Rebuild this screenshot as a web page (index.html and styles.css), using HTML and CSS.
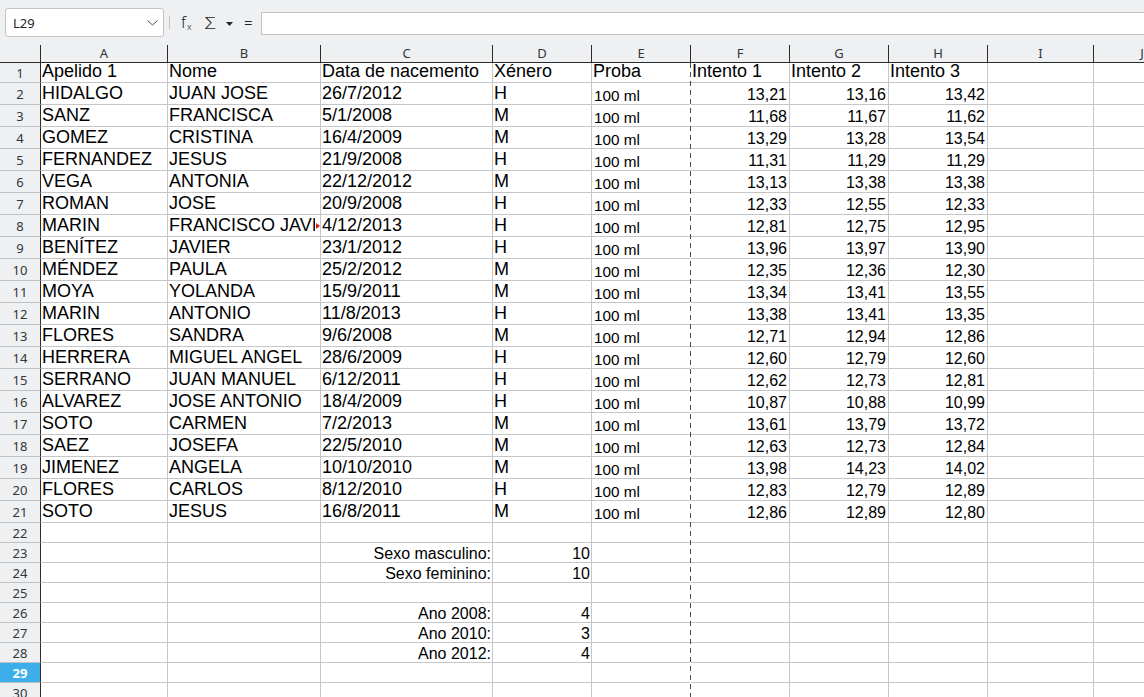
FILE: index.html
```html
<!DOCTYPE html>
<html lang="gl">
<head>
    <meta charset="UTF-8">
    <meta name="viewport" content="width=device-width, initial-scale=1.0">
    <title>Folla de cálculo</title>
    <link rel="stylesheet" href="styles.css">
</head>
<body>
    <div class="toolbar">
        <div class="namebox">
            <span>L29</span>
            <svg class="chev" width="11" height="6" viewBox="0 0 11 6"><polyline points="0.5,0.5 5.5,5 10.5,0.5" fill="none" stroke="#4d4d4d" stroke-width="1"/></svg>
        </div>
        <div class="sep"></div>
        <div class="tool fx">f<sub>x</sub></div>
        <div class="tool sum">&Sigma;</div>
        <svg class="tool drop" width="7" height="4" viewBox="0 0 7 4"><polygon points="0,0 7,0 3.5,4" fill="#232629"/></svg>
        <div class="tool eq">=</div>
        <div class="formula"></div>
    </div>

    <div class="sheet">
        <div class="row head">
            <div class="corner"></div>
            <div>A</div><div>B</div><div>C</div><div>D</div><div>E</div>
            <div>F</div><div>G</div><div>H</div><div>I</div><div>J</div>
        </div>

        <div class="row first">
            <div class="rh">1</div>
            <div class="c">Apelido 1</div><div class="c">Nome</div><div class="c">Data de nacemento</div><div class="c">Xénero</div><div class="c">Proba</div>
            <div class="c">Intento 1</div><div class="c">Intento 2</div><div class="c">Intento 3</div><div class="c"></div><div class="c"></div>
        </div>
        <div class="row">
            <div class="rh">2</div>
            <div class="c">HIDALGO</div><div class="c">JUAN JOSE</div><div class="c">26/7/2012</div><div class="c">H</div><div class="c ml">100 ml</div>
            <div class="c n">13,21</div><div class="c n">13,16</div><div class="c n">13,42</div><div class="c"></div><div class="c"></div>
        </div>
        <div class="row">
            <div class="rh">3</div>
            <div class="c">SANZ</div><div class="c">FRANCISCA</div><div class="c">5/1/2008</div><div class="c">M</div><div class="c ml">100 ml</div>
            <div class="c n">11,68</div><div class="c n">11,67</div><div class="c n">11,62</div><div class="c"></div><div class="c"></div>
        </div>
        <div class="row">
            <div class="rh">4</div>
            <div class="c">GOMEZ</div><div class="c">CRISTINA</div><div class="c">16/4/2009</div><div class="c">M</div><div class="c ml">100 ml</div>
            <div class="c n">13,29</div><div class="c n">13,28</div><div class="c n">13,54</div><div class="c"></div><div class="c"></div>
        </div>
        <div class="row">
            <div class="rh">5</div>
            <div class="c">FERNANDEZ</div><div class="c">JESUS</div><div class="c">21/9/2008</div><div class="c">H</div><div class="c ml">100 ml</div>
            <div class="c n">11,31</div><div class="c n">11,29</div><div class="c n">11,29</div><div class="c"></div><div class="c"></div>
        </div>
        <div class="row">
            <div class="rh">6</div>
            <div class="c">VEGA</div><div class="c">ANTONIA</div><div class="c">22/12/2012</div><div class="c">M</div><div class="c ml">100 ml</div>
            <div class="c n">13,13</div><div class="c n">13,38</div><div class="c n">13,38</div><div class="c"></div><div class="c"></div>
        </div>
        <div class="row">
            <div class="rh">7</div>
            <div class="c">ROMAN</div><div class="c">JOSE</div><div class="c">20/9/2008</div><div class="c">H</div><div class="c ml">100 ml</div>
            <div class="c n">12,33</div><div class="c n">12,55</div><div class="c n">12,33</div><div class="c"></div><div class="c"></div>
        </div>
        <div class="row">
            <div class="rh">8</div>
            <div class="c">MARIN</div><div class="c ov"><span class="clip">FRANCISCO JAVIER</span></div><div class="c">4/12/2013</div><div class="c">H</div><div class="c ml">100 ml</div>
            <div class="c n">12,81</div><div class="c n">12,75</div><div class="c n">12,95</div><div class="c"></div><div class="c"></div>
        </div>
        <div class="row">
            <div class="rh">9</div>
            <div class="c">BENÍTEZ</div><div class="c">JAVIER</div><div class="c">23/1/2012</div><div class="c">H</div><div class="c ml">100 ml</div>
            <div class="c n">13,96</div><div class="c n">13,97</div><div class="c n">13,90</div><div class="c"></div><div class="c"></div>
        </div>
        <div class="row">
            <div class="rh">10</div>
            <div class="c">MÉNDEZ</div><div class="c">PAULA</div><div class="c">25/2/2012</div><div class="c">M</div><div class="c ml">100 ml</div>
            <div class="c n">12,35</div><div class="c n">12,36</div><div class="c n">12,30</div><div class="c"></div><div class="c"></div>
        </div>
        <div class="row">
            <div class="rh">11</div>
            <div class="c">MOYA</div><div class="c">YOLANDA</div><div class="c">15/9/2011</div><div class="c">M</div><div class="c ml">100 ml</div>
            <div class="c n">13,34</div><div class="c n">13,41</div><div class="c n">13,55</div><div class="c"></div><div class="c"></div>
        </div>
        <div class="row">
            <div class="rh">12</div>
            <div class="c">MARIN</div><div class="c">ANTONIO</div><div class="c">11/8/2013</div><div class="c">H</div><div class="c ml">100 ml</div>
            <div class="c n">13,38</div><div class="c n">13,41</div><div class="c n">13,35</div><div class="c"></div><div class="c"></div>
        </div>
        <div class="row">
            <div class="rh">13</div>
            <div class="c">FLORES</div><div class="c">SANDRA</div><div class="c">9/6/2008</div><div class="c">M</div><div class="c ml">100 ml</div>
            <div class="c n">12,71</div><div class="c n">12,94</div><div class="c n">12,86</div><div class="c"></div><div class="c"></div>
        </div>
        <div class="row">
            <div class="rh">14</div>
            <div class="c">HERRERA</div><div class="c">MIGUEL ANGEL</div><div class="c">28/6/2009</div><div class="c">H</div><div class="c ml">100 ml</div>
            <div class="c n">12,60</div><div class="c n">12,79</div><div class="c n">12,60</div><div class="c"></div><div class="c"></div>
        </div>
        <div class="row">
            <div class="rh">15</div>
            <div class="c">SERRANO</div><div class="c">JUAN MANUEL</div><div class="c">6/12/2011</div><div class="c">H</div><div class="c ml">100 ml</div>
            <div class="c n">12,62</div><div class="c n">12,73</div><div class="c n">12,81</div><div class="c"></div><div class="c"></div>
        </div>
        <div class="row">
            <div class="rh">16</div>
            <div class="c">ALVAREZ</div><div class="c">JOSE ANTONIO</div><div class="c">18/4/2009</div><div class="c">H</div><div class="c ml">100 ml</div>
            <div class="c n">10,87</div><div class="c n">10,88</div><div class="c n">10,99</div><div class="c"></div><div class="c"></div>
        </div>
        <div class="row">
            <div class="rh">17</div>
            <div class="c">SOTO</div><div class="c">CARMEN</div><div class="c">7/2/2013</div><div class="c">M</div><div class="c ml">100 ml</div>
            <div class="c n">13,61</div><div class="c n">13,79</div><div class="c n">13,72</div><div class="c"></div><div class="c"></div>
        </div>
        <div class="row">
            <div class="rh">18</div>
            <div class="c">SAEZ</div><div class="c">JOSEFA</div><div class="c">22/5/2010</div><div class="c">M</div><div class="c ml">100 ml</div>
            <div class="c n">12,63</div><div class="c n">12,73</div><div class="c n">12,84</div><div class="c"></div><div class="c"></div>
        </div>
        <div class="row">
            <div class="rh">19</div>
            <div class="c">JIMENEZ</div><div class="c">ANGELA</div><div class="c">10/10/2010</div><div class="c">M</div><div class="c ml">100 ml</div>
            <div class="c n">13,98</div><div class="c n">14,23</div><div class="c n">14,02</div><div class="c"></div><div class="c"></div>
        </div>
        <div class="row">
            <div class="rh">20</div>
            <div class="c">FLORES</div><div class="c">CARLOS</div><div class="c">8/12/2010</div><div class="c">H</div><div class="c ml">100 ml</div>
            <div class="c n">12,83</div><div class="c n">12,79</div><div class="c n">12,89</div><div class="c"></div><div class="c"></div>
        </div>
        <div class="row">
            <div class="rh">21</div>
            <div class="c">SOTO</div><div class="c">JESUS</div><div class="c">16/8/2011</div><div class="c">M</div><div class="c ml">100 ml</div>
            <div class="c n">12,86</div><div class="c n">12,89</div><div class="c n">12,80</div><div class="c"></div><div class="c"></div>
        </div>

        <div class="row short">
            <div class="rh">22</div>
            <div class="c"></div><div class="c"></div><div class="c"></div><div class="c"></div><div class="c"></div>
            <div class="c"></div><div class="c"></div><div class="c"></div><div class="c"></div><div class="c"></div>
        </div>
        <div class="row short">
            <div class="rh">23</div>
            <div class="c"></div><div class="c"></div><div class="c s">Sexo masculino:</div><div class="c s">10</div><div class="c"></div>
            <div class="c"></div><div class="c"></div><div class="c"></div><div class="c"></div><div class="c"></div>
        </div>
        <div class="row short">
            <div class="rh">24</div>
            <div class="c"></div><div class="c"></div><div class="c s">Sexo feminino:</div><div class="c s">10</div><div class="c"></div>
            <div class="c"></div><div class="c"></div><div class="c"></div><div class="c"></div><div class="c"></div>
        </div>
        <div class="row short">
            <div class="rh">25</div>
            <div class="c"></div><div class="c"></div><div class="c"></div><div class="c"></div><div class="c"></div>
            <div class="c"></div><div class="c"></div><div class="c"></div><div class="c"></div><div class="c"></div>
        </div>
        <div class="row short">
            <div class="rh">26</div>
            <div class="c"></div><div class="c"></div><div class="c s">Ano 2008:</div><div class="c s">4</div><div class="c"></div>
            <div class="c"></div><div class="c"></div><div class="c"></div><div class="c"></div><div class="c"></div>
        </div>
        <div class="row short">
            <div class="rh">27</div>
            <div class="c"></div><div class="c"></div><div class="c s">Ano 2010:</div><div class="c s">3</div><div class="c"></div>
            <div class="c"></div><div class="c"></div><div class="c"></div><div class="c"></div><div class="c"></div>
        </div>
        <div class="row short">
            <div class="rh">28</div>
            <div class="c"></div><div class="c"></div><div class="c s">Ano 2012:</div><div class="c s">4</div><div class="c"></div>
            <div class="c"></div><div class="c"></div><div class="c"></div><div class="c"></div><div class="c"></div>
        </div>
        <div class="row short">
            <div class="rh sel">29</div>
            <div class="c"></div><div class="c"></div><div class="c"></div><div class="c"></div><div class="c"></div>
            <div class="c"></div><div class="c"></div><div class="c"></div><div class="c"></div><div class="c"></div>
        </div>
        <div class="row short">
            <div class="rh">30</div>
            <div class="c"></div><div class="c"></div><div class="c"></div><div class="c"></div><div class="c"></div>
            <div class="c"></div><div class="c"></div><div class="c"></div><div class="c"></div><div class="c"></div>
        </div>

        <!-- salto de páxina entre E e F -->
        <div class="pagebreak"></div>
    </div>
</body>
</html>
```

FILE: styles.css
```css
body{
    margin:0;
    overflow:hidden;
    background:#fff;
    font-family:"Noto Sans", "DejaVu Sans", sans-serif;
    color:#232629;
}

/* barra de fórmulas */
.toolbar{
    height:45px;
    background:#eff0f1;
    display:flex;
    align-items:center;
}
.namebox{
    box-sizing:border-box;
    width:159px;
    height:29px;
    margin-left:5px;
    background:#fff;
    border:1px solid #c3c4c6;
    border-radius:3px;
    display:flex;
    align-items:center;
    justify-content:space-between;
    padding:0 5px 0 7px;
    font-size:13px;
}
.chev{
    margin-top:1px;
}
.sep{
    width:1px;
    height:13px;
    margin-left:5px;
    background:#c3c4c6;
}
.tool{
    color:#232629;
    line-height:1;
}
.fx{
    margin-left:11px;
    font-size:16px;
    font-weight:300;
}
.fx sub{
    font-size:9px;
    vertical-align:-2px;
    margin-left:1px;
}
.sum{
    margin-left:13px;
    font-size:20px;
    font-weight:300;
    transform:scaleY(0.8);
}
.drop{
    margin-left:10px;
    margin-top:2px;
}
.eq{
    margin-left:11px;
    font-size:15px;
}
.formula{
    flex:1;
    height:21px;
    margin-left:8px;
    margin-right:-6px;
    margin-top:1px;
    background:#fff;
    border:1px solid #c3c4c6;
}

/* folla */
.sheet{
    position:relative;
}
.row{
    display:grid;
    grid-template-columns:41px 127px 153px 172px 99px 99px 99px 99px 99px 106px 99px;
    height:22px;
}
.row.first{ height:20px; }
.row.short{ height:20px; }
.row > div{
    box-sizing:border-box;
    border-right:1px solid #c6c6c6;
    border-bottom:1px solid #c6c6c6;
    overflow:hidden;
    white-space:nowrap;
}

.head{
    height:18px;
    background:#eff0f1;
}
.head > div{
    border-right-color:#2b2b2b;
    border-bottom-color:#2b2b2b;
    font-size:13px;
    line-height:17px;
    text-align:center;
    color:#31363b;
}
.head > div:last-child{
    text-indent:-2px;
}

.rh{
    background:#eff0f1;
    border-right-color:#2b2b2b !important;
    border-bottom-color:#c0c1c3 !important;
    font-size:13px;
    color:#31363b;
    display:flex;
    align-items:center;
    justify-content:center;
}
.rh.sel{
    background:#3daee9;
    color:#fff;
    font-weight:bold;
}

.c{
    display:flex;
    align-items:flex-end;
    padding:0 2px 1px 1px;
    font-family:"Liberation Sans", Arial, sans-serif;
    font-size:18px;
    line-height:20px;
    color:#000;
}
.first .c{
    line-height:17px;
    padding-bottom:2px;
}
.c.n{
    justify-content:flex-end;
    padding-bottom:0;
    font-size:16px;
    line-height:18px;
}
.c.ml{
    padding-left:2px;
    padding-bottom:0;
    font-size:15.3px;
    line-height:16px;
}
.c.s{
    justify-content:flex-end;
    padding:0 1px 0 2px;
    font-size:16px;
    line-height:17px;
}
.c.ov{
    position:relative;
}
.c.ov .clip{
    display:block;
    width:146px;
    overflow:hidden;
}
.c.ov::after{
    content:"";
    position:absolute;
    right:0;
    top:8px;
    border-left:4px solid #c9211e;
    border-top:3px solid transparent;
    border-bottom:3px solid transparent;
}

.pagebreak{
    position:absolute;
    left:690px;
    top:18px;
    bottom:0;
    width:1px;
    background:repeating-linear-gradient(to bottom, #4a4a4a 0 5px, #fff 5px 9px);
}
```
